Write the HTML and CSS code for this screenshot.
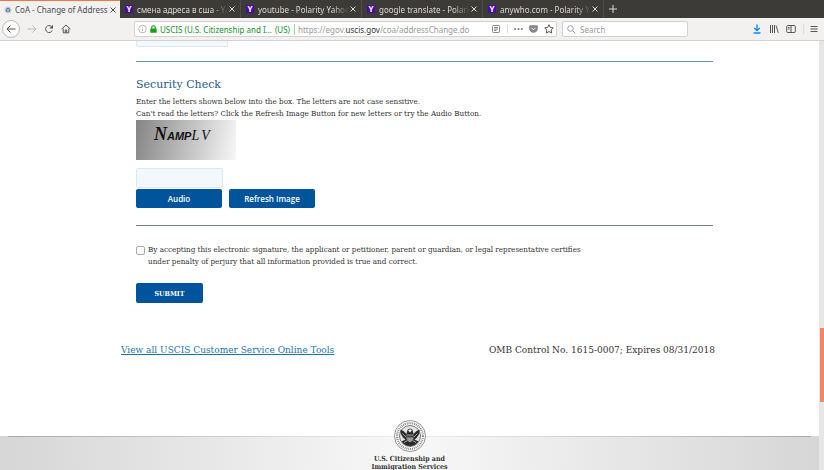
FILE: index.html
```html
<!DOCTYPE html>
<html lang="en">
<head>
<meta charset="utf-8">
<title>CoA - Change of Address</title>
<link rel="stylesheet" href="styles.css">
</head>
<body>
<header class="browser">
  <nav class="tabs" aria-label="Tabs">
    <div class="tab active">
      <svg class="favicon" viewBox="0 0 9 9"><circle cx="4.500" cy="4.500" r="4" fill="#c9d2da"/><circle cx="4.500" cy="4.500" r="2.600" fill="#466c8d"/><path d="M2 3l2.500 1L7 3M4.500 4v3M3 5.500h3" stroke="#e5edf3" stroke-width=".7" fill="none"/></svg>
      <span class="tab-title">CoA - Change of Address</span>
      <button class="close" aria-label="Close tab"><svg viewBox="0 0 6 6"><path d="M.5.5l5 5M5.500.5l-5 5"/></svg></button>
    </div>
    <div class="tab">
      <span class="favicon yahoo">Y</span>
      <span class="tab-title">смена адреса в сша - Ya</span>
      <button class="close" aria-label="Close tab"><svg viewBox="0 0 6 6"><path d="M.5.5l5 5M5.500.5l-5 5"/></svg></button>
    </div>
    <div class="tab">
      <span class="favicon yahoo">Y</span>
      <span class="tab-title">youtube - Polarity Yahoo</span>
      <button class="close" aria-label="Close tab"><svg viewBox="0 0 6 6"><path d="M.5.5l5 5M5.500.5l-5 5"/></svg></button>
    </div>
    <div class="tab">
      <span class="favicon yahoo">Y</span>
      <span class="tab-title">google translate - Polari</span>
      <button class="close" aria-label="Close tab"><svg viewBox="0 0 6 6"><path d="M.5.5l5 5M5.500.5l-5 5"/></svg></button>
    </div>
    <div class="tab">
      <span class="favicon yahoo">Y</span>
      <span class="tab-title">anywho.com - Polarity Y</span>
      <button class="close" aria-label="Close tab"><svg viewBox="0 0 6 6"><path d="M.5.5l5 5M5.500.5l-5 5"/></svg></button>
    </div>
    <button class="new-tab" aria-label="New tab"><svg viewBox="0 0 8 8"><path d="M4 0v8M0 4h8"/></svg></button>
  </nav>
  <div class="toolbar">
    <div class="nav-buttons">
      <button class="back" aria-label="Back"><svg viewBox="0 0 10 10"><path d="M9.500 5H1M4.500 1.500L1 5l3.500 3.500"/></svg></button>
      <button class="forward" aria-label="Forward"><svg viewBox="0 0 10 10"><path d="M.5 5H9M5.500 1.500L9 5 5.500 8.500"/></svg></button>
      <button class="icon" aria-label="Reload"><svg viewBox="0 0 10 10"><path d="M8.300 6.500A3.500 3.500 0 1 1 7.500 2.500"/><path d="M9 .8v3.700H5.300z" fill="#555" stroke="none"/></svg></button>
      <button class="icon" aria-label="Home"><svg viewBox="0 0 10 10"><path d="M.7 5L5 1l4.300 4M2.200 4.500v4.300h5.600V4.500M4.300 8.500V6h1.400v2.500"/></svg></button>
    </div>
    <div class="address">
      <svg class="info" viewBox="0 0 9 9"><circle cx="4.500" cy="4.500" r="3.800"/><path d="M4.500 4v2.500M4.500 2.300v.8"/></svg>
      <svg class="lock" viewBox="0 0 7 8"><path d="M1.700 4V2.500a1.800 1.800 0 0 1 3.600 0V4" fill="none" stroke="#12a312" stroke-width="1.100"/><rect x=".3" y="3.500" width="6.400" height="4.300" rx=".6" fill="#12a312"/></svg>
      <span class="identity">USCIS (U.S. Citizenship and I…</span>
      <span class="country">(US)</span>
      <span class="url">https://egov.<b>uscis.gov</b>/coa/addressChange.do</span>
      <svg class="reader" viewBox="0 0 8 8"><rect x=".5" y=".5" width="7" height="7" rx=".8"/><path d="M2 2.500h4M2 4h4M2 5.500h2.500"/></svg>
      <svg class="dots" viewBox="0 0 9 8"><circle cx="1.200" cy="4" r="1"/><circle cx="4.500" cy="4" r="1"/><circle cx="7.800" cy="4" r="1"/></svg>
      <svg class="pocket" viewBox="0 0 9 8"><path d="M1 .3h7a.8.8 0 0 1 .8.8v2.400a4.300 4.300 0 0 1-8.600 0V1.100A.8.8 0 0 1 1 .3z" fill="#858585"/><path d="M2.500 2.800l2 2 2-2" stroke="#fff" fill="none"/></svg>
      <svg class="star" viewBox="0 0 10 10"><path d="M5 .7l1.300 2.800 3 .4-2.200 2.100.6 3L5 7.600 2.300 9l.6-3L.7 3.900l3-.4z"/></svg>
    </div>
    <div class="search">
      <svg viewBox="0 0 9 9"><circle cx="3.500" cy="3.500" r="2.800"/><path d="M5.500 5.500l3 3"/></svg>
      <input type="search" aria-label="Search" placeholder="Search">
    </div>
    <div class="tools">
      <button class="icon download" aria-label="Downloads"><svg viewBox="0 0 10 10"><path d="M5 .5v6M2.300 4L5 6.700 7.700 4M1.500 9h7"/></svg></button>
      <button class="icon" aria-label="Library"><svg viewBox="0 0 10 10"><path d="M1.500 1v8M3.500 1v8M5.500 1v8M7 1.500l2.300 7.300"/></svg></button>
      <button class="icon" aria-label="Sidebar"><svg viewBox="0 0 10 10"><rect x=".7" y="1.500" width="8.600" height="7" rx="1"/><path d="M5 1.500v7M2 3.500h1.500M2 5h1.500"/></svg></button>
      <button class="icon menu" aria-label="Menu"><svg viewBox="0 0 10 10"><path d="M1.500 2.500h7M1.500 5h7M1.500 7.500h7"/></svg></button>
    </div>
  </div>
</header>
<div class="viewport">
  <div class="page">
    <main class="form-page">
      <form class="form">
        <input class="field upper" type="text" aria-label="Previous field">
        <hr>
        <section class="security">
          <h2>Security Check</h2>
          <p>Enter the letters shown below into the box. The letters are not case sensitive.<br>Can't read the letters? Click the Refresh Image Button for new letters or try the Audio Button.</p>
          <div class="captcha"><span class="c-n">N</span><span class="c-amp">AMP</span><span class="c-l">L</span><span class="c-v">V</span></div>
          <input class="field code" type="text" aria-label="Security letters">
          <div class="actions">
            <button type="button" class="btn">Audio</button>
            <button type="button" class="btn">Refresh Image</button>
          </div>
        </section>
        <hr class="wide">
        <div class="consent">
          <input type="checkbox" id="accept">
          <label for="accept">By accepting this electronic signature, the applicant or petitioner, parent or guardian, or legal representative certifies<br>under penalty of perjury that all information provided is true and correct.</label>
        </div>
        <button type="submit" class="btn submit">SUBMIT</button>
      </form>
      <div class="meta">
        <a href="#">View all USCIS Customer Service Online Tools</a>
        <span>OMB Control No. 1615-0007; Expires 08/31/2018</span>
      </div>
    </main>
    <footer class="footer">
      <svg class="seal" viewBox="0 0 32 32" role="img" aria-label="Department of Homeland Security seal">
        <circle cx="16" cy="16" r="15.500" fill="#fff" stroke="#777" stroke-width=".8"/>
        <circle cx="16" cy="16" r="12.900" fill="none" stroke="#888" stroke-width="2.200" stroke-dasharray="1 .9"/>
        <circle cx="16" cy="16" r="10.500" fill="#e4e4e4" stroke="#555" stroke-width=".8"/>
        <path d="M6.500 9.500Q10 10.500 12.500 14L13.500 10Q16 7 18.500 10L19.500 14Q22 10.500 25.500 9.500Q26 16 20.500 19.500L24.500 21.500Q21 26 16 26T7.500 21.500L11.500 19.500Q6 16 6.500 9.500z" fill="#292929"/>
        <path d="M12.500 14.500h7v4q-1 3-3.500 4-2.500-1-3.500-4z" fill="#999"/>
        <path d="M12.500 15.500h7v2h-7z" fill="#444"/>
        <path d="M14.500 10.500q2-2 3 0l-1.500 1.700zM8.500 13.500l3.500 3.500M23.500 13.500l-3.500 3.500M10 22.500l3.500-2M22 22.500l-3.500-2" fill="#fff" stroke="#ddd" stroke-width=".7"/>
      </svg>
      <p>U.S. Citizenship and<br>Immigration Services</p>
    </footer>
  </div>
  <div class="scrollbar" aria-hidden="true"><div class="thumb"></div></div>
</div>
</body>
</html>
```

FILE: styles.css
```css
* { box-sizing: border-box; }
body {
  margin: 0;
  min-height: 100vh;
  display: flex;
  flex-direction: column;
  background: #fff;
  color: #333;
  font-family: "DejaVu Serif Condensed", "DejaVu Serif", serif;
  font-size: 8px;
}
button { border: 0; padding: 0; background: none; font: inherit; color: inherit; }
svg { display: block; flex: none; }
p, h2 { margin: 0; }

.browser { font-family: "Noto Sans", sans-serif; font-size: 8px; }
.tabs { display: flex; height: 18px; background: #3c3b37; color: #dfdbd2; }
.tab {
  flex: 0 1 121px;
  min-width: 0;
  display: flex;
  align-items: center;
  gap: 4px;
  padding: 0 5px;
  border-right: 1px solid #504e4a;
}
.tab.active {
  flex-basis: 120px;
  gap: 3px;
  padding: 0 4px;
  background: #f2f1f0;
  color: #4c4c4c;
  border-top: 1px solid #f07746;
  border-right: 0;
}
.favicon { flex: none; width: 8px; height: 8px; }
.yahoo { background: #4a0aa5; color: #fff; font-weight: 700; line-height: 8px; text-align: center; }
.tab-title {
  flex: 1;
  min-width: 0;
  margin-right: -3px;
  overflow: hidden;
  white-space: nowrap;
  mask-image: linear-gradient(to right, #000 82%, transparent);
}
.active .tab-title { mask-image: none; }
.close svg { width: 6px; height: 6px; fill: none; stroke: currentColor; }
.new-tab { padding: 0 5px; }
.new-tab svg { width: 8px; height: 8px; stroke: currentColor; }

.toolbar {
  display: flex;
  align-items: center;
  height: 23px;
  padding: 0 5px 0 2px;
  background: #f2f1f0;
  border-bottom: 1px solid #d3d2d0;
}
.toolbar svg { width: 10px; height: 10px; fill: none; stroke: #555; }
.nav-buttons { display: flex; align-items: center; gap: 7px; flex: none; width: 132px; }
.back {
  display: grid;
  place-items: center;
  width: 18px;
  height: 18px;
  border: 1px solid #bbb;
  border-radius: 50%;
  background: #fcfcfc;
}
.toolbar .forward svg { stroke: #bbb; }
.address, .search {
  display: flex;
  align-items: center;
  height: 16px;
  background: #fff;
  border: 1px solid #d3d2d0;
  border-radius: 2px;
}
.address { flex: 1; min-width: 0; gap: 3px; padding: 0 2px 0 3px; white-space: nowrap; }
.toolbar .info { width: 9px; stroke: #999; stroke-width: .7; }
.toolbar .lock { width: 7px; height: 8px; stroke: none; }
.identity, .country { color: #12921f; }
.country { padding-right: 4px; border-right: 1px solid #a3d7a3; }
.url { flex: 1; overflow: hidden; color: #999; }
.url b { color: #333; font-weight: 400; }
.toolbar .reader { width: 8px; height: 8px; stroke: #888; }
.toolbar .dots { width: 16px; height: 8px; margin-left: 4px; padding-left: 6px; border-left: 1px solid #ddd; fill: #777; stroke: none; }
.toolbar .pocket { width: 9px; height: 8px; margin: 0 3px; stroke: none; }
.search { flex: none; width: 126px; gap: 4px; margin-left: 5px; padding: 0 4px; }
.toolbar .search svg { width: 9px; height: 9px; stroke: #999; }
.search input { flex: 1; min-width: 0; padding: 0; border: 0; outline: 0; background: none; font: inherit; }
.search input::placeholder { color: #999; opacity: 1; }
.tools { display: flex; flex: none; align-items: center; gap: 7px; margin-left: 64px; }
.toolbar .download svg { stroke: #0a84ff; stroke-width: 1.3; }
.menu { padding-left: 5px; border-left: 1px solid #ddd; }

.viewport { flex: 1; display: flex; }
.page { flex: 1; min-width: 0; display: flex; flex-direction: column; }
.form-page { padding: 0 104px 0 121px; }
.form { padding: 0 2px 0 15px; }
.field {
  display: block;
  border: 1px solid #dce7f1;
  border-radius: 2px;
  background: #f3f8fc;
}
.upper { width: 92px; height: 6px; border-top: 0; border-radius: 0 0 2px 2px; }
hr { height: 1px; margin: 14px 0 15px; border: 0; background: #7190ae; }
.wide { margin: 17px 0 18px; background: #777f88; }
h2 { font: 400 11px/16px "DejaVu Serif", serif; color: #295b87; }
.security p { margin-top: 3px; line-height: 12px; }
.captcha {
  display: flex;
  align-items: baseline;
  width: 100px;
  height: 40px;
  padding: 4px 0 0 18px;
  background: linear-gradient(100deg, #858585, #b8b8b8 45%, #f7f7f7);
  color: #111;
}
.c-n { font: italic 700 18px/20px "Liberation Serif", serif; }
.c-amp { font: italic 700 11px/20px "Liberation Sans", sans-serif; }
.c-l, .c-v { font: italic 14px/20px "Liberation Serif", serif; }
.c-v { margin-left: 2px; }
.code { width: 87px; height: 20px; margin-top: 8px; }
.actions { display: flex; gap: 7px; margin-top: 1px; }
.btn {
  width: 86px;
  height: 19px;
  border-radius: 2px;
  background: #00549c;
  color: #fff;
  font: 600 8px "Open Sans", sans-serif;
}
.consent { display: flex; align-items: flex-start; gap: 3px; line-height: 12px; }
.consent input {
  appearance: none;
  flex: none;
  width: 9px;
  height: 9px;
  margin: 2px 0 0;
  border: 1px solid #aaa;
  border-radius: 2px;
  background: #fbfbfb;
}
.submit { display: block; width: 67px; height: 20px; margin-top: 15px; font: 700 7px "DejaVu Serif Condensed", serif; }
.meta {
  display: flex;
  justify-content: space-between;
  margin-top: 40px;
  font-family: "DejaVu Serif", serif;
  font-size: 9px;
  line-height: 14px;
}
.meta a { color: #1b76a8; }

.footer {
  flex: 1;
  display: flex;
  flex-direction: column;
  align-items: center;
  margin-top: 79px;
  background: linear-gradient(to right, #d6d6d6, #f8f8f8 50%, #d6d6d6);
}
.footer::before { content: ""; align-self: stretch; height: 1px; margin: 0 8px; background: linear-gradient(to right, #aaa, #eee 50%, #aaa); }
.seal { width: 32px; height: 32px; margin-top: -17px; }
.footer p { margin-top: 3px; font: 700 7px/8px "DejaVu Serif Condensed", serif; text-align: center; }
.scrollbar { width: 5px; padding: 287px 0 0 1px; background: #e6e6e6; }
.thumb { height: 74px; background: #f28660; }
```
